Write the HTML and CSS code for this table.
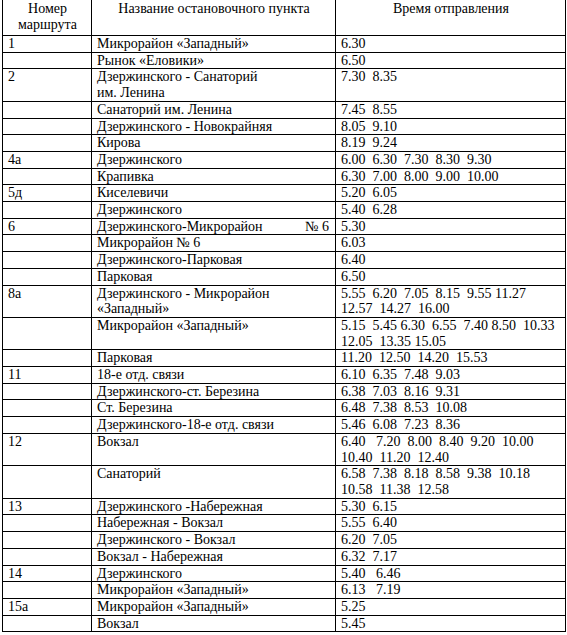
FILE: index.html
```html
<!DOCTYPE html>
<html lang="ru">
<head>
<meta charset="utf-8">
<title>Расписание</title>
<link rel="stylesheet" href="styles.css">
</head>
<body>
<table class="sched">
  <colgroup><col class="c1"><col class="c2"><col class="c3"></colgroup>
  <thead>
    <tr class="head"><th>Номер<br>маршрута</th><th>Название остановочного пункта</th><th>Время отправления</th></tr>
  </thead>
  <tbody>
    <tr><td>1</td><td>Микрорайон «Западный»</td><td class="t">6.30</td></tr>
    <tr><td></td><td>Рынок «Еловики»</td><td class="t">6.50</td></tr>
    <tr><td>2</td><td>Дзержинского - Санаторий<br>им. Ленина</td><td class="t">7.30  8.35</td></tr>
    <tr><td></td><td>Санаторий им. Ленина</td><td class="t">7.45  8.55</td></tr>
    <tr><td></td><td>Дзержинского - Новокрайняя</td><td class="t">8.05  9.10</td></tr>
    <tr><td></td><td>Кирова</td><td class="t">8.19  9.24</td></tr>
    <tr><td>4а</td><td>Дзержинского</td><td class="t">6.00  6.30  7.30  8.30  9.30</td></tr>
    <tr><td></td><td>Крапивка</td><td class="t">6.30  7.00  8.00  9.00  10.00</td></tr>
    <tr><td>5д</td><td>Киселевичи</td><td class="t">5.20  6.05</td></tr>
    <tr><td></td><td>Дзержинского</td><td class="t">5.40  6.28</td></tr>
    <tr><td>6</td><td><span class="spread"><span>Дзержинского-Микрорайон</span><span>№ 6</span></span></td><td class="t">5.30</td></tr>
    <tr><td></td><td>Микрорайон № 6</td><td class="t">6.03</td></tr>
    <tr><td></td><td>Дзержинского-Парковая</td><td class="t">6.40</td></tr>
    <tr><td></td><td>Парковая</td><td class="t">6.50</td></tr>
    <tr><td>8а</td><td>Дзержинского - Микрорайон<br>«Западный»</td><td class="t">5.55  6.20  7.05  8.15  9.55 11.27<br>12.57  14.27  16.00</td></tr>
    <tr><td></td><td>Микрорайон «Западный»</td><td class="t">5.15  5.45 6.30  6.55  7.40 8.50  10.33<br>12.05  13.35 15.05</td></tr>
    <tr><td></td><td>Парковая</td><td class="t">11.20  12.50  14.20  15.53</td></tr>
    <tr><td>11</td><td>18-е отд. связи</td><td class="t">6.10  6.35  7.48  9.03</td></tr>
    <tr><td></td><td>Дзержинского-ст. Березина</td><td class="t">6.38  7.03  8.16  9.31</td></tr>
    <tr><td></td><td>Ст. Березина</td><td class="t">6.48  7.38  8.53  10.08</td></tr>
    <tr><td></td><td>Дзержинского-18-е отд. связи</td><td class="t">5.46  6.08  7.23  8.36</td></tr>
    <tr><td>12</td><td>Вокзал</td><td class="t">6.40   7.20  8.00  8.40  9.20  10.00<br>10.40  11.20  12.40</td></tr>
    <tr><td></td><td>Санаторий</td><td class="t">6.58  7.38  8.18  8.58  9.38  10.18<br>10.58  11.38  12.58</td></tr>
    <tr><td>13</td><td>Дзержинского -Набережная</td><td class="t">5.30  6.15</td></tr>
    <tr><td></td><td>Набережная - Вокзал</td><td class="t">5.55  6.40</td></tr>
    <tr><td></td><td>Дзержинского - Вокзал</td><td class="t">6.20  7.05</td></tr>
    <tr><td></td><td>Вокзал - Набережная</td><td class="t">6.32  7.17</td></tr>
    <tr><td>14</td><td>Дзержинского</td><td class="t">5.40   6.46</td></tr>
    <tr><td></td><td>Микрорайон «Западный»</td><td class="t">6.13   7.19</td></tr>
    <tr><td>15а</td><td>Микрорайон «Западный»</td><td class="t">5.25</td></tr>
    <tr><td></td><td>Вокзал</td><td class="t">5.45</td></tr>
  </tbody>
</table>
</body>
</html>
```
FILE: styles.css
```css
html, body {
  margin: 0;
  padding: 0;
  background: #fff;
}
body {
  padding: 0 0 0 2px;
  font-family: "Liberation Serif", "Times New Roman", serif;
  font-size: 14px;
  color: #000;
}
.sched {
  border-collapse: collapse;
  table-layout: fixed;
  width: 563px;
  margin-top: -1px;
}
.c1 { width: 89px; }
.c2 { width: 244px; }
.c3 { width: 230px; }
.sched th, .sched td {
  border: 1px solid #000;
  padding: 0 4px 0 5px;
  line-height: 15.7px;
  text-align: left;
  vertical-align: top;
  font-weight: normal;
}
.sched th {
  text-align: center;
  height: 34px;
  padding-top: 1px;
}
.t {
  white-space: pre;
}
.spread {
  display: flex;
  justify-content: space-between;
  padding-right: 2px;
}
```
